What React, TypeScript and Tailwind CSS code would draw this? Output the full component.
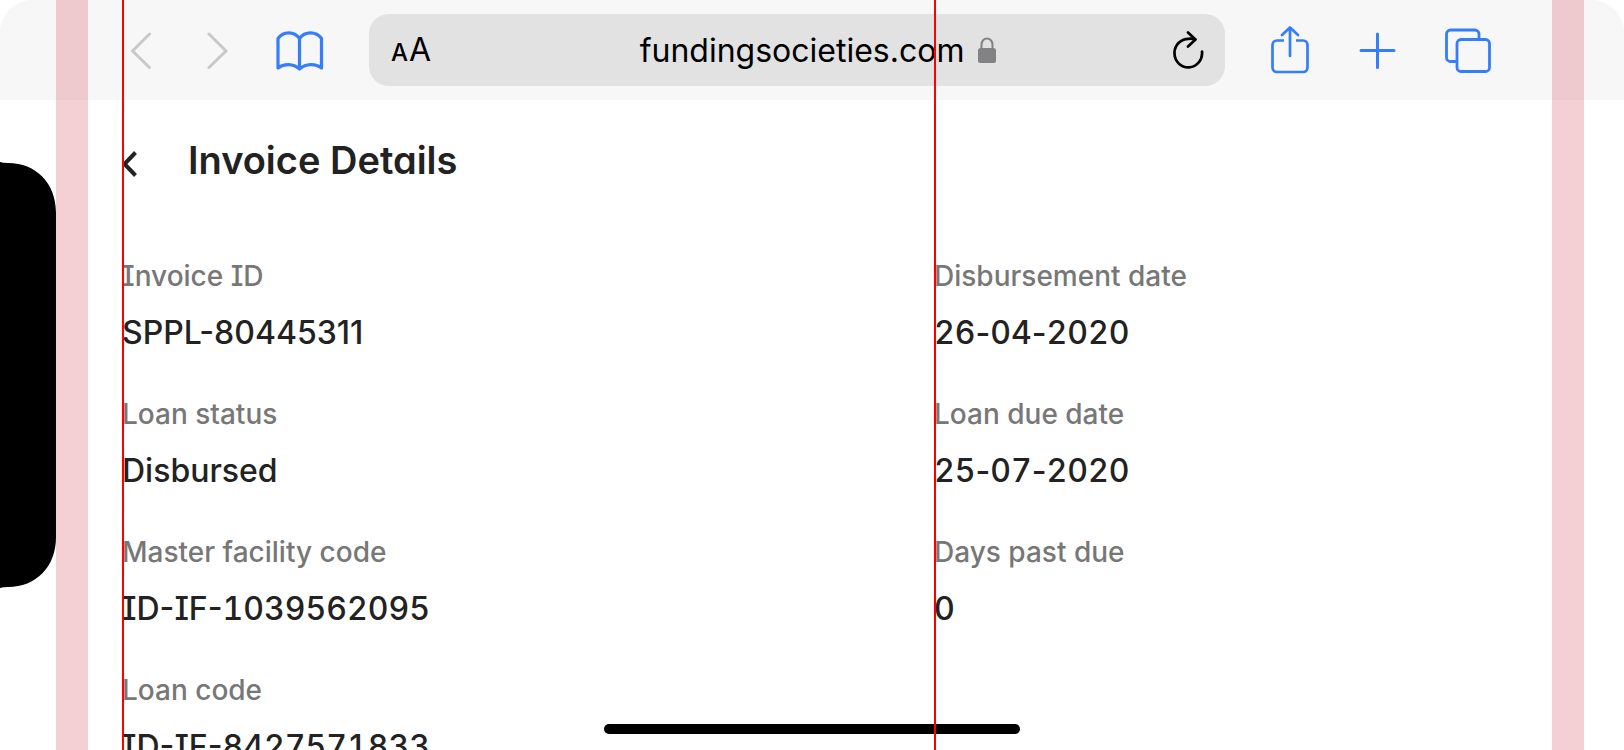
import type { ReactNode } from "react";

type Field = { label: string; value: string; tabular?: boolean };

const leftFields: Field[] = [
  { label: "Invoice ID", value: "SPPL-80445311" },
  { label: "Loan status", value: "Disbursed" },
  { label: "Master facility code", value: "ID-IF-1039562095", tabular: true },
  { label: "Loan code", value: "ID-IF-8427571833", tabular: true },
];

const rightFields: Field[] = [
  { label: "Disbursement date", value: "26-04-2020", tabular: true },
  { label: "Loan due date", value: "25-07-2020", tabular: true },
  { label: "Days past due", value: "0" },
];

function IconButton({ label, className = "", children }: { label: string; className?: string; children: ReactNode }) {
  return (
    <button type="button" aria-label={label} className={`shrink-0 ${className}`}>
      {children}
    </button>
  );
}

function BrowserBar() {
  return (
    <header className="flex h-[100px] items-center rounded-t-[32px] bg-[#f7f7f7] pr-[132px] pl-[130px] text-[#357dfa]">
      <IconButton label="Back" className="text-[#c8c8c8]">
        <svg width="22" height="38" viewBox="0 0 22 38" fill="none" stroke="currentColor" strokeWidth="3" strokeLinecap="round" strokeLinejoin="round">
          <path d="M19.500 3L2.500 20L19.500 36.500" />
        </svg>
      </IconButton>
      <IconButton label="Forward" className="ml-[54px] text-[#c8c8c8]">
        <svg width="22" height="38" viewBox="0 0 22 38" fill="none" stroke="currentColor" strokeWidth="3" strokeLinecap="round" strokeLinejoin="round">
          <path d="M3 3L20 20L3 36.500" />
        </svg>
      </IconButton>
      <IconButton label="Bookmarks" className="ml-12">
        <svg width="48" height="42" viewBox="0 0 48 42" fill="none" stroke="currentColor" strokeWidth="3.200" strokeLinecap="round" strokeLinejoin="round">
          <path d="M23.500 9.500C18 2 7.500 2 2 9.500V39C8 34.300 17 34.300 23.500 40C30 34.300 39.500 34.300 45.500 39V9.500C40 2 29 2 23.500 9.500V40" />
        </svg>
      </IconButton>
      <div className="ml-[45px] flex h-[72px] min-w-0 flex-1 items-center rounded-[20px] bg-[#e2e2e2] pr-5 pl-[22px] text-black">
        <button type="button" aria-label="Text size" className="flex shrink-0 items-baseline gap-px pt-[2px]">
          <span className="text-2xl leading-10 font-medium">A</span>
          <span className="text-[32px] leading-10">A</span>
        </button>
        <div className="flex min-w-0 flex-1 items-center justify-center gap-[14px] pl-8">
          <span className="pt-[2px] text-[32px] leading-10">fundingsocieties.com</span>
          <svg width="18" height="26" viewBox="0 0 18 26" className="shrink-0 text-[#828285]">
            <path d="M3.500 12V7.500a5.500 6 0 0 1 11 0V12" fill="none" stroke="currentColor" strokeWidth="2" />
            <rect x="0" y="11" width="18" height="15" rx="2.500" fill="currentColor" />
          </svg>
        </div>
        <IconButton label="Reload">
          <svg width="32" height="38" viewBox="0 0 32 38" fill="none" stroke="currentColor" strokeWidth="2.700" strokeLinecap="round" strokeLinejoin="round">
            <path d="M29 20.500A13.800 14.300 0 1 1 15.500 7.800Q19 7.300 22 8.500" />
            <path d="M15 1.500L22.500 8.500L15 15.500" />
          </svg>
        </IconButton>
      </div>
      <IconButton label="Share" className="ml-[45px]">
        <svg width="40" height="50" viewBox="0 0 40 50" fill="none" stroke="currentColor" strokeWidth="2.700" strokeLinecap="round" strokeLinejoin="round">
          <path d="M14 15.500H7A4.500 4.500 0 0 0 2.500 20V42.500A4.500 4.500 0 0 0 7 47H33A4.500 4.500 0 0 0 37.500 42.500V20A4.500 4.500 0 0 0 33 15.500H26" strokeLinecap="butt" />
          <path d="M20 31V2.500M12 10L20 2.500L28 10" />
        </svg>
      </IconButton>
      <IconButton label="New tab" className="ml-12">
        <svg width="38" height="38" viewBox="0 0 38 38" fill="none" stroke="currentColor" strokeWidth="3" strokeLinecap="round">
          <path d="M19.500 3V36.500M3 19.500H36" />
        </svg>
      </IconButton>
      <IconButton label="Tabs" className="ml-12">
        <svg width="48" height="46" viewBox="0 0 48 46" fill="none" stroke="currentColor" strokeWidth="2.800">
          <rect x="13" y="12.500" width="32.500" height="32" rx="4" />
          <path d="M35 12.500V7A4 4 0 0 0 31 3H6.500A4 4 0 0 0 2.500 7V30.500A4 4 0 0 0 6.500 34.500H13" />
        </svg>
      </IconButton>
    </header>
  );
}

/* Equal-width digits, with the hyphens between groups kept proportional. */
function TabularValue({ value }: { value: string }) {
  return value.split(/(\d+)/).map((part, index) =>
    index % 2 === 1 ? (
      <span key={index} className="tabular-nums">
        {part}
      </span>
    ) : (
      part
    ),
  );
}

function FieldColumn({ fields }: { fields: Field[] }) {
  return (
    <dl className="flex flex-col gap-9 pl-[122px] font-medium">
      {fields.map((field) => (
        <div key={field.label} className="flex flex-col gap-3">
          <dt className="text-[28px] leading-10 text-[#777777]">{field.label}</dt>
          <dd className="text-[32px] leading-[50px] text-[#222222]">
            {field.tabular ? <TabularValue value={field.value} /> : field.value}
          </dd>
        </div>
      ))}
    </dl>
  );
}

function Overlays() {
  return (
    <div className="pointer-events-none absolute inset-0" aria-hidden="true">
      <svg className="absolute top-1/2 left-0 -translate-y-1/2" width="56" height="428" viewBox="0 0 56 428">
        <path d="M0 1Q3 2 8 2C36 2 56 22 56 52V376C56 406 36 426 8 426Q3 426 0 427Z" fill="#000" />
      </svg>
      <div className="absolute bottom-4 left-1/2 h-[10px] w-[416px] -translate-x-1/2 rounded-full bg-black" />
      <div className="absolute inset-y-0 left-14 w-8 bg-[#d34353]/25" />
      <div className="absolute inset-y-0 right-10 w-8 bg-[#d34353]/25" />
      <div className="absolute inset-y-0 left-[122px] w-[2px] bg-[#ff0000]" />
      <div className="absolute inset-y-0 left-[calc(50%+122px)] w-[2px] bg-[#ff0000]" />
    </div>
  );
}

export default function App() {
  return (
    <div className="relative h-screen overflow-hidden bg-white font-['Inter',sans-serif]">
      <BrowserBar />
      <main>
        <div className="flex items-center pt-9 pl-[122px]">
          <button type="button" aria-label="Go back" className="shrink-0 pt-2">
            <svg width="16" height="28" viewBox="0 0 16 28" fill="none" stroke="#222222" strokeWidth="4">
              <path d="M13.500 2.500L2.500 14L13.500 25.500" />
            </svg>
          </button>
          <h1 className="ml-[50px] text-[38px] leading-[48px] font-semibold text-[#222222] [font-feature-settings:'cv11']">
            Invoice Details
          </h1>
        </div>
        <div className="grid grid-cols-2 pt-[72px] [font-feature-settings:'cv08'] [font-optical-sizing:none]">
          <FieldColumn fields={leftFields} />
          <FieldColumn fields={rightFields} />
        </div>
      </main>
      <Overlays />
    </div>
  );
}
